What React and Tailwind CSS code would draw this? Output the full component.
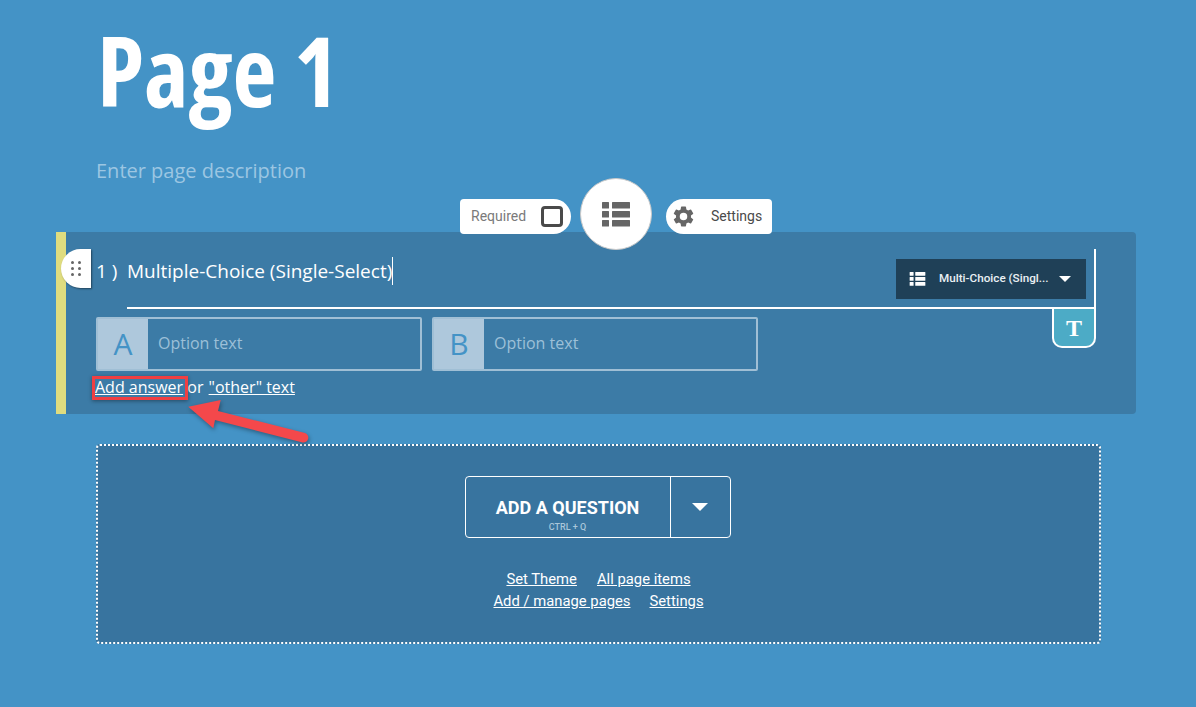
function ListIcon({ className }) {
  return (
    <svg viewBox="0 0 28 25" className={className} fill="currentColor">
      <rect x="0" y="0" width="7" height="6.5" rx="0.5" />
      <rect x="10" y="0" width="18" height="6.5" rx="0.5" />
      <rect x="0" y="9" width="7" height="6.5" rx="0.5" />
      <rect x="10" y="9" width="18" height="6.5" rx="0.5" />
      <rect x="0" y="18" width="7" height="6.5" rx="0.5" />
      <rect x="10" y="18" width="18" height="6.5" rx="0.5" />
    </svg>
  );
}

function GearIcon({ className }) {
  return (
    <svg viewBox="0 0 24 24" className={className} fill="currentColor">
      <path d="M19.14 12.94c.04-.3.06-.61.06-.94s-.02-.64-.07-.94l2.03-1.58a.49.49 0 0 0 .12-.61l-1.92-3.32a.49.49 0 0 0-.59-.22l-2.39.96a7 7 0 0 0-1.62-.94l-.36-2.54a.48.48 0 0 0-.48-.41h-3.84a.48.48 0 0 0-.47.41l-.36 2.54c-.59.24-1.13.57-1.62.94l-2.39-.96a.49.49 0 0 0-.59.22L2.74 8.87a.48.48 0 0 0 .12.61l2.03 1.58c-.05.3-.09.63-.09.94s.02.64.07.94l-2.03 1.58a.49.49 0 0 0-.12.61l1.92 3.32c.12.22.37.29.59.22l2.39-.96c.5.38 1.03.7 1.62.94l.36 2.54c.05.24.24.41.48.41h3.84c.24 0 .44-.17.47-.41l.36-2.54c.59-.24 1.13-.56 1.62-.94l2.39.96c.22.08.47 0 .59-.22l1.92-3.32a.48.48 0 0 0-.12-.61zM12 15.6A3.6 3.6 0 1 1 12 8.4a3.6 3.6 0 0 1 0 7.2z" />
    </svg>
  );
}

function Caret({ className }) {
  return <span className={`block w-0 h-0 border-x-transparent border-t-white ${className}`} />;
}

function OptionBox({ letter }) {
  return (
    <div className="w-[326px] h-[54px] flex border-[2px] border-[#a0bfd5] rounded-[2px]">
      <div className="w-[50px] bg-[#aec8dc] flex items-center justify-center pb-[2px] text-[#4493c6] text-[30px] font-['Open_Sans',sans-serif]">
        {letter}
      </div>
      <div className="flex-1 flex items-center pl-[10px] pb-[2px] text-[16px] text-[#9dc0d8] font-['Open_Sans',sans-serif]">
        Option text
      </div>
    </div>
  );
}

export default function App() {
  return (
    <div className="w-full h-[707px] overflow-hidden bg-[#4493c6] font-['Roboto',sans-serif] relative">
      <div className="flex flex-col pl-[97px] h-[232px] relative">
        <h1 className="text-white text-[96px] leading-[144px] mt-[-2px] font-bold font-['Open_Sans',sans-serif] [font-stretch:75%]">
          Page 1
        </h1>
        <p className="text-[20px] leading-[28px] mt-[15px] text-[#9cc6e2] font-['Open_Sans',sans-serif] -ml-px">
          Enter page description
        </p>

        {/* floating question toolbar */}
        <div className="absolute left-[460px] top-[178px] flex items-center z-10">
          <div className="mt-[4px] w-[111px] h-[35px] bg-white rounded-l-[4px] rounded-r-[18px] flex items-center pl-[11px] text-[14px] text-[#7a7a7a]">
            Required
            <span className="ml-[15px] w-[22px] h-[21px] border-[3px] border-[#4a4a4a] rounded-[4px]" />
          </div>
          <div className="ml-[9px] w-[72px] h-[72px] rounded-full bg-white border border-[#c9c9c9] flex items-center justify-center text-[#666666]">
            <ListIcon className="w-[28px] h-[25px]" />
          </div>
          <div className="mt-[4px] ml-[14px] w-[106px] h-[35px] bg-white rounded-r-[4px] rounded-l-[18px] flex items-center pl-[5px] text-[14px] text-[#4a4a4a]">
            <GearIcon className="w-[25px] h-[25px] text-[#666666]" />
            <span className="ml-[15px]">Settings</span>
          </div>
        </div>
      </div>

      {/* question card */}
      <div className="ml-[56px] w-[1080px] h-[182px] bg-[#3c7ba6] border-l-[10px] border-[#dfdc7f] rounded-r-[4px] relative">
        <div className="absolute left-[-5px] top-[17px] w-[30px] h-[39px] bg-white rounded-l-[20px] shadow-[1px_1px_2px_rgba(0,0,0,0.45)] flex items-center justify-center z-10">
          <span className="grid grid-cols-2 gap-x-[4px] gap-y-[3px]">
            {[0, 1, 2, 3, 4, 5].map((i) => (
              <span key={i} className="w-[3px] h-[3px] rounded-full bg-[#666666]" />
            ))}
          </span>
        </div>

        <div className="ml-[61px] w-[969px] h-[60px] border-b-2 border-r-2 border-white relative top-[17px]">
          <div className="absolute left-[-31px] top-[8px] flex items-center text-white text-[19px] leading-[28px] font-['Open_Sans',sans-serif]">
            <span className="w-[31px]">1 )</span>
            <span className="border-r border-white">Multiple-Choice (Single-Select)</span>
          </div>
          <div className="absolute right-[8px] top-[10px] w-[190px] h-[40px] bg-[#1f4057] flex items-center pl-[13px] text-white">
            <ListIcon className="w-[17px] h-[14px]" />
            <span className="ml-[13px] text-[11.7px] font-medium text-[#eaf0f4] whitespace-nowrap">Multi-Choice (Singl...</span>
            <Caret className="ml-[10px] border-x-[6.5px] border-t-[6.5px]" />
          </div>
          <div className="absolute right-[-2px] top-[60px] w-[44px] h-[39px] bg-[#4cabc6] border-2 border-t-0 border-white rounded-b-[10px] flex items-center justify-center text-white text-[24px] font-bold font-['Liberation_Serif',serif]">
            T
          </div>
        </div>

        <div className="ml-[30px] mt-[25px] flex gap-[10px]">
          <OptionBox letter="A" />
          <OptionBox letter="B" />
        </div>

        <p className="ml-[29px] mt-[5px] text-[16px] leading-[22px] text-white font-['Open_Sans',sans-serif]">
          <span className="underline">Add answer</span> or{' '}
          <span className="underline ml-px">"other" text</span>
        </p>

        <div className="absolute left-[26px] top-[144px] w-[96px] h-[24px] border-[3px] border-[#ef3f42] shadow-[0_1px_4px_rgba(0,0,0,0.4)]" />
      </div>

      {/* annotation arrow */}
      <svg className="absolute left-[185px] top-[398px] w-[130px] h-[50px] drop-shadow-[1px_2px_2px_rgba(0,0,0,0.35)]" viewBox="0 0 130 50">
        <path d="M3.3 8.7 L35.7 2 L33 13 L120 35 A4.8 4.8 0 0 1 116.7 44.3 L30 22 L28.3 30.3 Z" fill="#f4484b" />
      </svg>

      {/* add question area */}
      <div className="ml-[96px] mt-[30px] w-[1005px] h-[200px] bg-[#38749f] border-2 border-dotted border-white rounded-[4px] flex flex-col items-center">
        <div className="mt-[30px] mr-[2px] w-[266px] h-[62px] border border-white rounded-[4px] flex text-white">
          <div className="w-[205px] border-r border-white flex flex-col items-center pt-[20px]">
            <span className="text-[18px] leading-[22px] font-bold">ADD A QUESTION</span>
            <span className="text-[9px] leading-[10px] font-medium text-[#a9c6da] mt-[3px]">CTRL + Q</span>
          </div>
          <div className="flex-1 flex items-center justify-center">
            <Caret className="border-x-[8px] border-t-[8px]" />
          </div>
        </div>
        <div className="mt-[30px] flex gap-[20px] text-[14.8px] leading-[22px] text-white underline">
          <span>Set Theme</span>
          <span>All page items</span>
        </div>
        <div className="flex gap-[19px] text-[14.8px] leading-[22px] text-white underline">
          <span>Add / manage pages</span>
          <span>Settings</span>
        </div>
      </div>
    </div>
  );
}
